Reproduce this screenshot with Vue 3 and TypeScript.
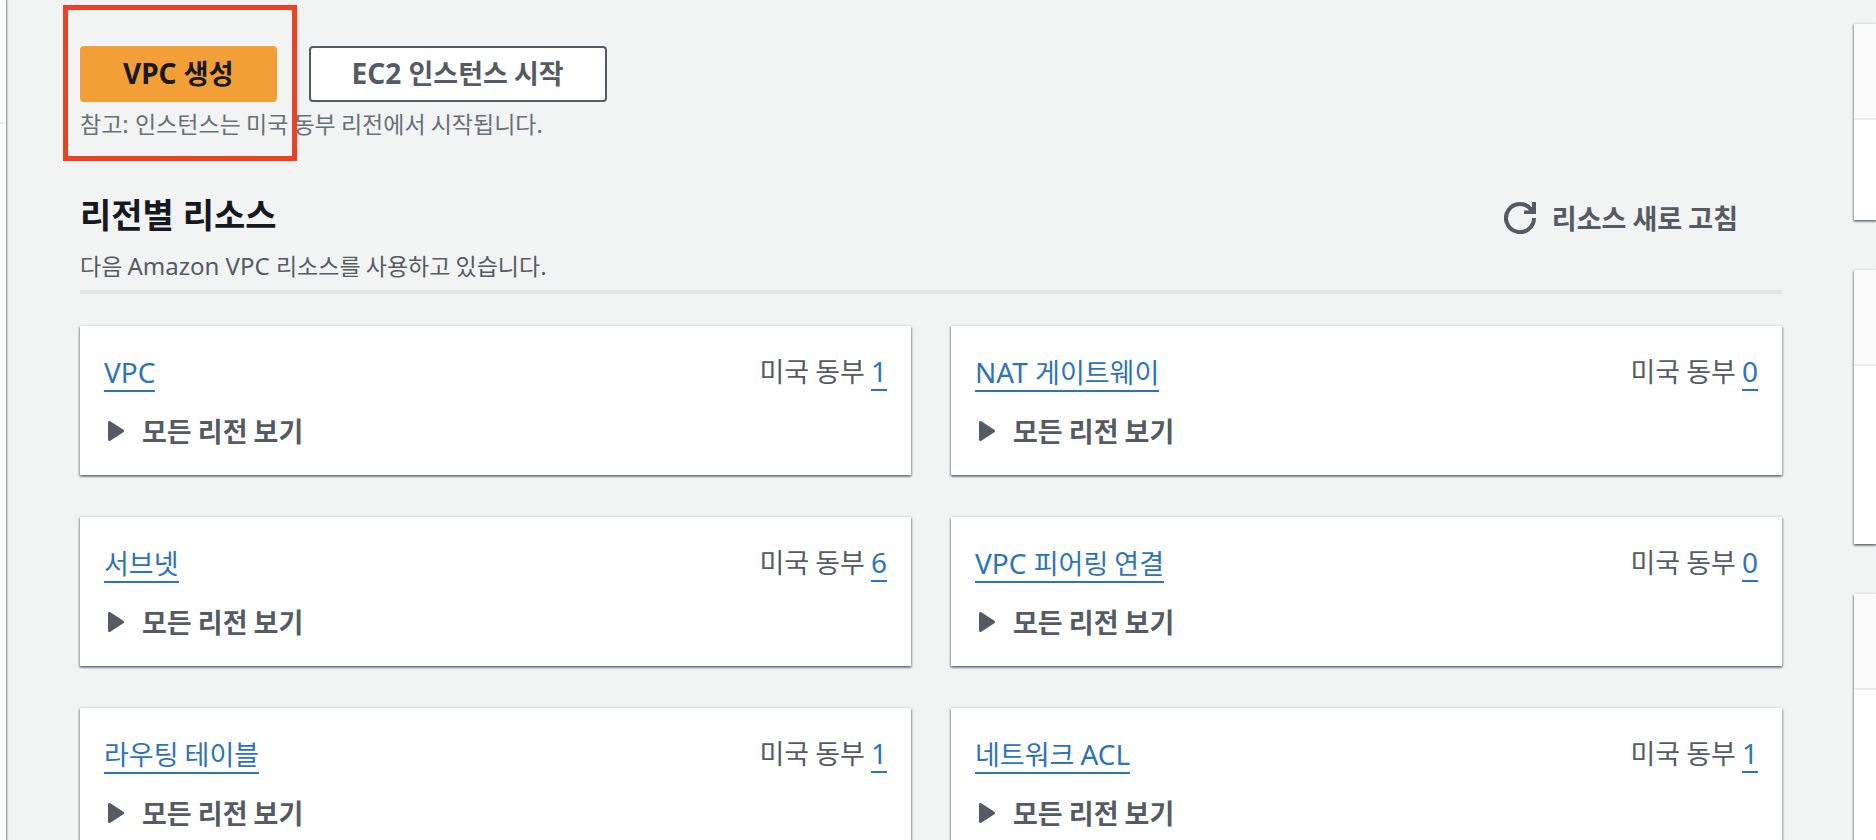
<script setup lang="ts">
import { h } from 'vue'

interface Resource {
  name: string
  count: number
}

const resources: Resource[] = [
  { name: 'VPC', count: 1 },
  { name: 'NAT 게이트웨이', count: 0 },
  { name: '서브넷', count: 6 },
  { name: 'VPC 피어링 연결', count: 0 },
  { name: '라우팅 테이블', count: 1 },
  { name: '네트워크 ACL', count: 1 },
]

// Hangul runs are set one step smaller than Latin so both scripts look even.
const Mixed = (props: { text: string }) =>
  (props.text.match(/[\uAC00-\uD7A3][\uAC00-\uD7A3 ]*|[^\uAC00-\uD7A3]+/g) ?? []).map((run) =>
    /[\uAC00-\uD7A3]/.test(run) ? h('span', { class: 'hangul' }, run) : run,
  )
Mixed.props = ['text']
</script>

<template>
  <div class="page">
    <div class="nav-edge"><hr class="nav-line" /></div>

    <main class="main">
      <div class="actions">
        <button type="button" class="btn primary"><Mixed text="VPC 생성" /></button>
        <button type="button" class="btn"><Mixed text="EC2 인스턴스 시작" /></button>
        <div class="highlight" aria-hidden="true"></div>
      </div>
      <p class="note"><Mixed text="참고: 인스턴스는 미국 동부 리전에서 시작됩니다." /></p>

      <header class="head">
        <div>
          <h1>리전별 리소스</h1>
          <p class="sub"><Mixed text="다음 Amazon VPC 리소스를 사용하고 있습니다." /></p>
        </div>
        <button type="button" class="refresh">
          <svg width="32" height="32" viewBox="0 0 32 32" aria-hidden="true">
            <path d="M30 16A14 14 0 1 1 27 7.4" fill="none" stroke="currentColor" stroke-width="4" />
            <path d="M28 0H32V12H20V8.500H24.500L28 5Z" fill="currentColor" />
          </svg>
          <span><Mixed text="리소스 새로 고침" /></span>
        </button>
      </header>

      <section class="grid">
        <article v-for="r in resources" :key="r.name" class="card">
          <div class="row">
            <a href="#" class="name"><Mixed :text="r.name" /></a>
            <span class="region"><Mixed text="미국 동부 " /><a href="#">{{ r.count }}</a></span>
          </div>
          <button type="button" class="expand" aria-expanded="false">
            <svg width="16" height="20" viewBox="0 0 16 20" aria-hidden="true">
              <path d="M1.500 1.500V18.500L14.500 10Z" fill="currentColor" stroke="currentColor" stroke-width="3" stroke-linejoin="round" />
            </svg>
            <span><Mixed text="모든 리전 보기" /></span>
          </button>
        </article>
      </section>
    </main>

    <aside class="side">
      <section class="panel short"><div class="panel-head"></div></section>
      <section class="panel mid"><div class="panel-head"></div></section>
      <section class="panel tall"><div class="panel-head"></div></section>
    </aside>
  </div>
</template>

<style>
body {
  margin: 0;
  overflow: hidden;
}
.hangul {
  font-family: 'Noto Sans CJK KR', sans-serif;
  font-size: 27px;
  line-height: 1;
  white-space: pre-wrap;
}
.note .hangul,
.sub .hangul {
  font-size: 23px;
}
</style>

<style scoped>
.page {
  display: grid;
  grid-template-columns: 6px 1fr 22px;
  height: 100vh;
  overflow: hidden;
  background: #f2f3f3;
  color: #545b64;
  font-family: 'Noto Sans', 'Noto Sans CJK KR', sans-serif;
  font-size: 28px;
  line-height: 44px;
}
button {
  font: inherit;
  font-weight: 700;
  color: inherit;
  cursor: pointer;
}
.nav-edge {
  background: #fff;
  box-shadow: 1px 0 2px rgba(0, 28, 36, 0.5);
}
.nav-line {
  margin: 122px 0 0;
  border: 0;
  border-top: 2px solid #eaeded;
}
.main {
  padding: 46px 72px 0 74px;
}
.actions {
  position: relative;
  display: flex;
  gap: 32px;
}
.btn {
  height: 56px;
  padding: 0 41px 2px;
  border: 2px solid #545b64;
  border-radius: 4px;
  background: #fff;
  line-height: 50px;
}
.primary {
  border-color: #f29f38;
  background: #f29f38;
  color: #16191f;
}
.highlight {
  position: absolute;
  left: -17px;
  top: -41px;
  width: 224px;
  height: 146px;
  border: 5px solid #eb4125;
  pointer-events: none;
}
.note,
.sub {
  margin: 0;
  font-size: 24px;
  line-height: 36px;
}
.note {
  margin-top: 4px;
  color: #687078;
}
.head {
  display: flex;
  justify-content: space-between;
  align-items: flex-start;
  margin-top: 49px;
  padding-bottom: 6px;
  border-bottom: 4px solid #e3e4e4;
}
h1 {
  margin: 0 0 9px;
  color: #16191f;
  font-size: 34px;
  font-weight: 700;
  line-height: 48px;
}
.refresh {
  display: flex;
  align-items: center;
  gap: 16px;
  height: 48px;
  margin-top: 3px;
  padding: 0 44px;
  border: 0;
  background: none;
}
.grid {
  display: grid;
  grid-template-columns: 1fr 1fr;
  gap: 42px 40px;
  margin-top: 32px;
}
.card,
.panel {
  background: #fff;
  box-shadow:
    0 2px 2px rgba(0, 28, 36, 0.3),
    1px 1px 2px rgba(0, 28, 36, 0.3),
    -1px 1px 2px rgba(0, 28, 36, 0.3),
    0 -2px 0 #eaeded;
}
.card {
  padding: 24px 24px 22px;
}
.row {
  display: flex;
  justify-content: space-between;
  align-items: flex-start;
  line-height: 36px;
}
a {
  display: inline-block;
  border-bottom: 2px solid #2e73b8;
  color: #2e73b8;
  text-decoration: none;
}
.name {
  margin-top: 4px;
}
.region {
  margin-top: 3px;
}
.expand {
  display: flex;
  align-items: center;
  gap: 18px;
  height: 44px;
  margin-top: 17px;
  padding: 0 4px;
  border: 0;
  background: none;
}
.side {
  display: grid;
  gap: 50px;
  align-content: start;
  padding-top: 24px;
}
.panel-head {
  height: 94px;
  border-bottom: 2px solid #eaeded;
  background: #fafafa;
}
.short {
  min-height: 196px;
}
.mid {
  min-height: 274px;
}
.tall {
  min-height: 300px;
}
</style>
